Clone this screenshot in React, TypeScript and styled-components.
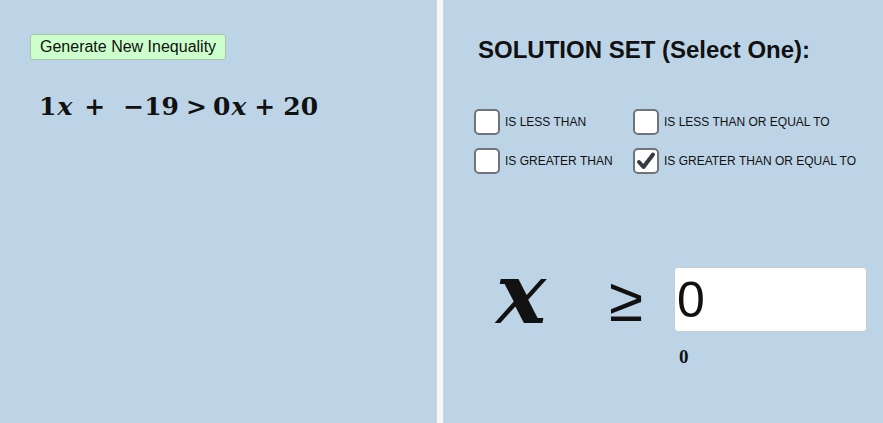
import React from "react";
import styled, { createGlobalStyle } from "styled-components";

const GlobalStyle = createGlobalStyle`
  html, body {
    margin: 0;
    padding: 0;
    background: #bdd4e7;
  }
  body {
    font-family: "Liberation Sans", Arial, sans-serif;
  }
`;

const options = [
  { label: "IS LESS THAN", checked: false },
  { label: "IS LESS THAN OR EQUAL TO", checked: false },
  { label: "IS GREATER THAN", checked: false },
  { label: "IS GREATER THAN OR EQUAL TO", checked: true },
];

export default function App() {
  return (
    <>
      <GlobalStyle />
      <Styled.Page>
        <Styled.Left>
          <Styled.Button>Generate New Inequality</Styled.Button>
          <Styled.Equation>
            1<Styled.Var>x</Styled.Var>
            <Styled.Op before={12} after={18}>+</Styled.Op>−19
            <Styled.Op before={7} after={6}>&gt;</Styled.Op>0
            <Styled.Var>x</Styled.Var>
            <Styled.Op before={8} after={8}>+</Styled.Op>20
          </Styled.Equation>
        </Styled.Left>
        <Styled.Divider />
        <Styled.Right>
          <Styled.Title>SOLUTION SET (Select One):</Styled.Title>
          <Styled.Options>
            {options.map((o) => (
              <Styled.Option key={o.label}>
                <Styled.Box>
                  {o.checked && (
                    <svg width="22" height="22" viewBox="0 0 22 22">
                      <path
                        d="M4 12 L8.5 17 L18 4.5"
                        fill="none"
                        stroke="#353b40"
                        strokeWidth="4"
                        strokeLinecap="round"
                        strokeLinejoin="round"
                      />
                    </svg>
                  )}
                </Styled.Box>
                <Styled.OptionText>{o.label}</Styled.OptionText>
              </Styled.Option>
            ))}
          </Styled.Options>
          <Styled.Answer>
            <Styled.BigVar>x</Styled.BigVar>
            <Styled.Relation>≥</Styled.Relation>
            <Styled.InputCol>
              <Styled.Input defaultValue="0" />
              <Styled.Caption>0</Styled.Caption>
            </Styled.InputCol>
          </Styled.Answer>
        </Styled.Right>
      </Styled.Page>
    </>
  );
}

const Styled = {
  Page: styled.div`
    display: flex;
    width: 883px;
    height: 423px;
    overflow: hidden;
  `,
  Left: styled.section`
    width: 436px;
    padding: 34px 0 0 30px;
    box-sizing: border-box;
  `,
  Button: styled.button`
    display: block;
    height: 26px;
    padding: 0 9px;
    background: #ccffcc;
    border: 1px solid #a9c4a9;
    border-radius: 3px;
    font-family: "Liberation Sans", Arial, sans-serif;
    font-size: 16px;
    color: #111;
  `,
  Equation: styled.div`
    display: flex;
    align-items: baseline;
    margin: 32px 0 0 9px;
    font-family: "DejaVu Serif", serif;
    font-weight: bold;
    font-size: 25px;
    color: #111;
    white-space: nowrap;
  `,
  Var: styled.i`
    font-weight: bold;
    margin-left: 1px;
  `,
  Op: styled.span<{ before: number; after: number }>`
    margin-left: ${(p) => p.before}px;
    margin-right: ${(p) => p.after}px;
  `,
  Divider: styled.div`
    width: 6px;
    background: #f6f6f6;
    border-left: 1px solid #d0d3d6;
    border-right: 1px solid #d0d3d6;
  `,
  Right: styled.section`
    flex: 1;
    display: flex;
    flex-direction: column;
    padding: 36px 0 0 30px;
    box-sizing: border-box;
  `,
  Title: styled.h1`
    margin: 0 0 0 4px;
    font-size: 24px;
    font-weight: bold;
    color: #111;
    line-height: 28px;
  `,
  Options: styled.div`
    display: grid;
    grid-template-columns: 159px auto;
    row-gap: 13px;
    margin-top: 45px;
  `,
  Option: styled.label`
    display: flex;
    align-items: center;
    gap: 5px;
  `,
  Box: styled.span`
    width: 26px;
    height: 26px;
    box-sizing: border-box;
    display: flex;
    align-items: center;
    justify-content: center;
    background: #fff;
    border: 2px solid #6e7479;
    border-radius: 5px;
  `,
  OptionText: styled.span`
    font-size: 12px;
    color: #111;
  `,
  Answer: styled.div`
    display: flex;
    align-items: flex-start;
    margin-top: 93px;
    padding-left: 22px;
  `,
  BigVar: styled.span`
    width: 113px;
    margin-top: -16px;
    font-family: "DejaVu Serif", serif;
    font-style: italic;
    font-weight: bold;
    font-size: 84px;
    line-height: 86px;
    color: #111;
  `,
  Relation: styled.span`
    width: 65px;
    margin-top: -2px;
    font-family: "Liberation Sans", Arial, sans-serif;
    font-size: 62px;
    line-height: 70px;
    color: #111;
  `,
  InputCol: styled.div`
    display: flex;
    flex-direction: column;
  `,
  Input: styled.input`
    width: 193px;
    height: 65px;
    box-sizing: border-box;
    padding: 0 2px;
    border: 1px solid #c8ccd0;
    border-radius: 4px;
    background: #fff;
    font-family: "Liberation Sans", Arial, sans-serif;
    font-size: 50px;
    color: #111;
    outline: none;
  `,
  Caption: styled.span`
    margin: 14px 0 0 5px;
    font-family: "Liberation Serif", "Times New Roman", serif;
    font-weight: bold;
    font-size: 19px;
    color: #111;
  `,
};
